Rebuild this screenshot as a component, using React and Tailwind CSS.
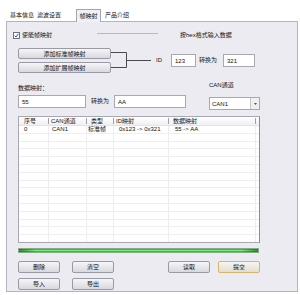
import React from 'react';

const Btn = ({ children, primary, className = '' }) => (
  <button
    className={
      'flex h-[12px] w-[42px] items-center justify-center rounded-[2px] border text-[6px] leading-none text-[#111] ' +
      (primary
        ? 'border-[#d8b46c] bg-[linear-gradient(#f7f5ef,#e2ded4)] '
        : 'border-[#9a9aa4] bg-[linear-gradient(#f6f6f8,#d8d8de)] ') +
      className
    }
  >
    {children}
  </button>
);

const Field = ({ value, className = '' }) => (
  <div className={'flex h-[13px] items-center border border-[#a8a8b4] bg-white px-[3px] text-[6px] leading-none text-[#111] ' + className}>
    {value}
  </div>
);

const cols = [
  { w: 'w-[29px]', head: '序号', hp: 'pl-[5px]', bp: 'pl-[5px]' },
  { w: 'w-[38px]', head: 'CAN通道', hp: 'pl-[3px]', bp: 'pl-[3px]' },
  { w: 'w-[27px]', head: '类型', hp: 'pl-[5px]', bp: 'pl-[1px]' },
  { w: 'w-[55px]', head: 'ID映射', hp: 'pl-[3px]', bp: 'pl-[5px]' },
  { w: 'w-[87px]', head: '数据映射', hp: 'pl-[5px]', bp: 'pl-[6px]' },
  { w: 'w-[4px]', head: '', hp: '', bp: '' },
];

const rows = [['0', 'CAN1', '标准帧', '0x123 -> 0x321', '55 -> AA', '']];
for (let i = 0; i < 14; i++) rows.push(['', '', '', '', '', '']);

export default function App() {
  return (
    <div className="h-[295px] w-[300px] overflow-hidden bg-white font-['Liberation_Sans','Noto_Sans_CJK_SC',sans-serif] text-[6px] text-[#111]">
      {/* tabs */}
      <div className="flex h-[21px] items-end pl-[10px]">
        <span className="flex h-[12px] w-[27px] items-center">基本信息</span>
        <span className="flex h-[12px] w-[39px] items-center">滤波设置</span>
        <span className="relative z-10 -mb-px flex h-[13px] w-[25px] items-center justify-center border border-b-0 border-[#a4a4b0] bg-[#f1f0f5]">
          帧映射
        </span>
        <span className="flex h-[12px] items-center pl-[4px]">产品介绍</span>
      </div>

      {/* panel */}
      <div className="ml-[6px] h-[271px] w-[292px] border border-[#b4b4c0] bg-[#ecebf2]">
        {/* enable row */}
        <div className="mt-[7px] flex h-[12px] items-center pl-[6px]">
          <span className="flex h-[7px] w-[7px] items-center justify-center border border-[#707088] bg-white">
            <svg width="5" height="5" viewBox="0 0 5 5">
              <path d="M0.6 2.6 L2 4 L4.4 0.8" fill="none" stroke="#2a4fb8" strokeWidth="1" />
            </svg>
          </span>
          <span className="ml-[2px] w-[75px]">使能帧映射</span>
          <span className="mb-[4px] h-px w-[61px] bg-[#b8b8c4]" />
          <span className="ml-[22px]">按hex格式输入数据</span>
        </div>

        {/* add buttons + ID */}
        <div className="mt-[7px] flex h-[25px] items-center pl-[11px]">
          <div className="flex w-[93px] flex-col gap-[3px]">
            <button className="flex h-[11px] items-center justify-center rounded-[2px] border border-[#9a9aa4] bg-[linear-gradient(#f6f6f8,#d8d8de)] text-[6px] leading-none">
              添加标准帧映射
            </button>
            <button className="flex h-[11px] items-center justify-center rounded-[2px] border border-[#9a9aa4] bg-[linear-gradient(#f6f6f8,#d8d8de)] text-[6px] leading-none">
              添加扩展帧映射
            </button>
          </div>
          <svg width="40" height="25" viewBox="0 0 40 25">
            <path d="M0 4.5 H15.5 V19.5 H0 M15.5 12.5 H40" fill="none" stroke="#4a4a55" strokeWidth="1" />
          </svg>
          <span className="w-[20px] pl-[5px]">ID</span>
          <Field value="123" className="w-[25px]" />
          <span className="w-[27px] pl-[3px]">转换为</span>
          <Field value="321" className="w-[32px]" />
        </div>

        {/* data mapping */}
        <div className="mt-[7px] flex pl-[11px]">
          <div className="w-[168px]">
            <div className="mt-[3px] flex h-[10px] items-center">数据映射：</div>
            <div className="mt-[2px] flex items-center">
              <Field value="55" className="w-[68px]" />
              <span className="w-[28px] pl-[5px]">转换为</span>
              <Field value="AA" className="w-[72px]" />
            </div>
          </div>
          <div className="ml-[23px]">
            <div className="flex h-[10px] items-center">CAN通道</div>
            <div className="mt-[7px] flex h-[13px] w-[51px] border border-[#a8a8b4] bg-white">
              <span className="flex flex-1 items-center pl-[2px] leading-none">CAN1</span>
              <span className="flex w-[9px] items-center justify-center border-l border-[#c4c4cc] bg-[#f0f0f3]">
                <svg width="3" height="2" viewBox="0 0 3 2">
                  <path d="M0 0 H3 L1.5 2 Z" fill="#555" />
                </svg>
              </span>
            </div>
          </div>
        </div>

        {/* table */}
        <div className="ml-[11px] mt-[6px] h-[127px] w-[242px] overflow-hidden border border-[#a8a8b4] border-r-[#8c8c98] bg-white">
          <div className="flex h-[9px] border-b border-[#e2e2e8] bg-[linear-gradient(#ffffff,#f0f0f4)]">
            {cols.map((c, i) => (
              <div key={i} className={`${c.w} relative flex items-center ${c.hp} leading-none`}>
                {i > 0 && <span className="absolute left-0 top-[1px] h-[6px] w-px bg-[#a0a0a8]" />}
                {c.head}
              </div>
            ))}
          </div>
          {rows.map((r, ri) => (
            <div key={ri} className="flex h-[7.8px] border-b border-[#efeff3]">
              {cols.map((c, i) => (
                <div key={i} className={`${c.w} flex items-center ${c.bp} leading-none ${i > 0 ? 'border-l border-[#ececf0]' : ''}`}>
                  {r[i]}
                </div>
              ))}
            </div>
          ))}
        </div>

        {/* progress */}
        <div className="ml-[11px] mt-[5px] h-[5px] w-[241px] border border-[#8aa88a] bg-[linear-gradient(to_right,rgba(0,70,0,0.55),rgba(0,70,0,0)_7%,rgba(0,70,0,0)_93%,rgba(0,70,0,0.55)),linear-gradient(#2f9a33,#70f070_50%,#2f9a33)]" />

        {/* bottom buttons */}
        <div className="mt-[8px] flex pl-[11px]">
          <Btn>删除</Btn>
          <Btn className="ml-[12px]">清空</Btn>
          <Btn className="ml-[54px]">读取</Btn>
          <Btn primary className="ml-[8px]">提交</Btn>
        </div>
        <div className="mt-[5px] flex pl-[11px]">
          <Btn>导入</Btn>
          <Btn className="ml-[12px]">导出</Btn>
        </div>
      </div>
    </div>
  );
}
